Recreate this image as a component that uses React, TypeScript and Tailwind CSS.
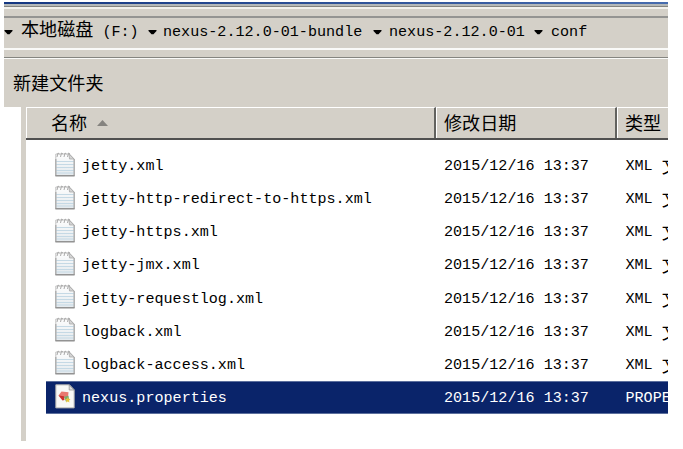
import React from "react";

const files = [
  "jetty.xml",
  "jetty-http-redirect-to-https.xml",
  "jetty-https.xml",
  "jetty-jmx.xml",
  "jetty-requestlog.xml",
  "logback.xml",
  "logback-access.xml",
  "nexus.properties",
];

function Arrow() {
  return (
    <svg className="h-[5px] w-[9px] shrink-0" viewBox="0 0 9 5">
      <path d="M.5 0h8v1L5.5 4.3h-2L.5 1z" fill="#000" />
    </svg>
  );
}

function NotepadIcon() {
  return (
    <svg className="mb-[3px] h-[25px] w-[20px] shrink-0" viewBox="0 0 20 25">
      <defs>
        <linearGradient id="paper" x1="0" y1="0" x2="0" y2="1">
          <stop offset="0" stopColor="#fdfdfd" />
          <stop offset="1" stopColor="#e3e9ed" />
        </linearGradient>
      </defs>
      <path d="M.8 2h13.7l4.7 5v16.6H.8z" fill="url(#paper)" stroke="#c2c2c2" />
      <path d="M1 9.5h18M1 12.5h18M1 15.5h18M1 18.5h18M1 21h18" stroke="#c5d9e5" strokeWidth="1.2" />
      <path d="M.8 7v16.6h18.4V7" fill="none" stroke="#a8a8a8" strokeWidth="1.2" />
      <path d="M.5 23.7h19" stroke="#929292" strokeWidth="1.3" />
      <path d="M14 2l5 5h-4.5z" fill="#d4d4d4" stroke="#aaa" strokeWidth=".8" />
      <path d="M2 5l1-4 1.5 1M5.5 5l1-4L8 2M9 5l1-4 1.5 1M12.5 5l1-4L15 2" fill="none" stroke="#aaa" />
    </svg>
  );
}

function PropertiesIcon() {
  return (
    <svg className="mb-[3px] h-[25px] w-[20px] shrink-0" viewBox="0 0 20 25">
      <path d="M.8.8h13.7l4.7 5v18.1H.8z" fill="#f8f8f6" stroke="#aaa" />
      <path d="M14.2 1l4.8 5h-4.8z" fill="#ddd" stroke="#999" strokeWidth=".8" />
      <path d="M6.5 7.5l7 .8-.5 5-5.5.8-4-2.6z" fill="#e8786f" />
      <path d="M3.5 11.5l5.5.8.5 3.7-2 .5z" fill="#cc302d" />
      <path d="M9 12.7l4.5-1 .5 4-3 2z" fill="#76a96f" />
      <path d="M12.8 13l.8 1.8 1.9.3-1.4 1.4.3 2-1.6-1-1.7 1 .3-2-1.4-1.4 2-.3z" fill="#e5c53d" />
    </svg>
  );
}

export default function App() {
  return (
    <div className="h-[449px] w-[683px] overflow-hidden bg-white pl-1 pt-0.5 font-['Liberation_Mono','Noto_Sans_CJK_SC',monospace] text-[15.1px] leading-5 text-black">
      <main className="flex h-[439px] w-[664px] flex-col overflow-hidden whitespace-pre">
        <div className="h-0.5 shrink-0 bg-linear-to-r from-[#153781] to-[#476cae]" />
        <div className="h-0.5 shrink-0 bg-[#b4b8b8]" />
        <div className="h-px shrink-0 bg-[#85847f]" />
        <div className="h-0.5 shrink-0 bg-[#f3f2ed]" />
        <div className="h-[7px] shrink-0 bg-[#d4d0c8]" />
        <nav className="flex h-8 shrink-0 items-center border-t-2 border-[#949492] bg-[#d4d0c8] pb-0.5">
          <Arrow />
          <span className="ml-2 w-[127px] pb-0.5"><span className="text-[18.1px]">本地磁盘</span> (F:)</span>
          <Arrow />
          <span className="ml-1.5 w-[210px] pb-px">nexus-2.12.0-01-bundle</span>
          <Arrow />
          <span className="ml-[7px] w-[145px] pb-px">nexus-2.12.0-01</span>
          <Arrow />
          <span className="ml-2 pb-px">conf</span>
        </nav>
        <div className="h-[11px] shrink-0 border-t-2 border-b border-[#fafaf8] bg-[#d4d0c8] pt-[7px]">
          <div className="h-px bg-[#858580]" />
        </div>
        <div className="flex h-12 shrink-0 items-center bg-[#d4d0c8] pt-[3px] pl-[9px] text-[18.1px]">新建文件夹</div>
        <section className="flex min-h-0 flex-1">
          <aside className="w-[17px] shrink-0" />
          <div className="w-[5px] shrink-0 bg-[#d4d0c8]" />
          <div className="min-w-0 flex-1">
            <header className="flex h-[33px] border-b-2 border-b-[#505050] bg-[#d4d0c8] text-[18.1px]">
              <div className="flex w-[410px] shrink-0 items-center border-t border-r-2 border-l border-t-white border-l-white border-r-[#62625f] pt-1 pl-6">
                名称
                <svg className="mb-1 ml-[10px] h-[6px] w-[11px]" viewBox="0 0 11 6"><path d="M0 6L5.5 0 11 6z" fill="#85837f" /></svg>
              </div>
              <div className="flex w-[181px] shrink-0 items-center border-t border-r-2 border-l border-t-white border-l-white border-r-[#62625f] pt-1 pl-[7px]">修改日期</div>
              <div className="flex flex-1 items-center border-t border-l border-white pt-1 pl-[7px]">类型</div>
            </header>
            <div className="pt-[9px] pl-5">
              {files.map((name, i) => {
                const selected = i === files.length - 1;
                return (
                  <div key={name} className={`flex h-[33.15px] items-center overflow-hidden ${selected ? "border-y border-[#5c6f9d] bg-[#0a246a] text-white" : ""}`}>
                    <div className="flex w-[398px] shrink-0 items-center pl-[9px]">
                      {selected ? <PropertiesIcon /> : <NotepadIcon />}
                      <span className="ml-[7px] pt-px">{name}</span>
                    </div>
                    <span className="w-[181.5px] shrink-0 pt-px">2015/12/16 13:37</span>
                    <span className="flex shrink-0 items-center pt-px">
                      {selected ? "PROPERTIES" : "XML "}
                      {!selected && <span className="pt-1 text-[18.1px]">文档</span>}
                    </span>
                  </div>
                );
              })}
            </div>
          </div>
        </section>
      </main>
    </div>
  );
}
